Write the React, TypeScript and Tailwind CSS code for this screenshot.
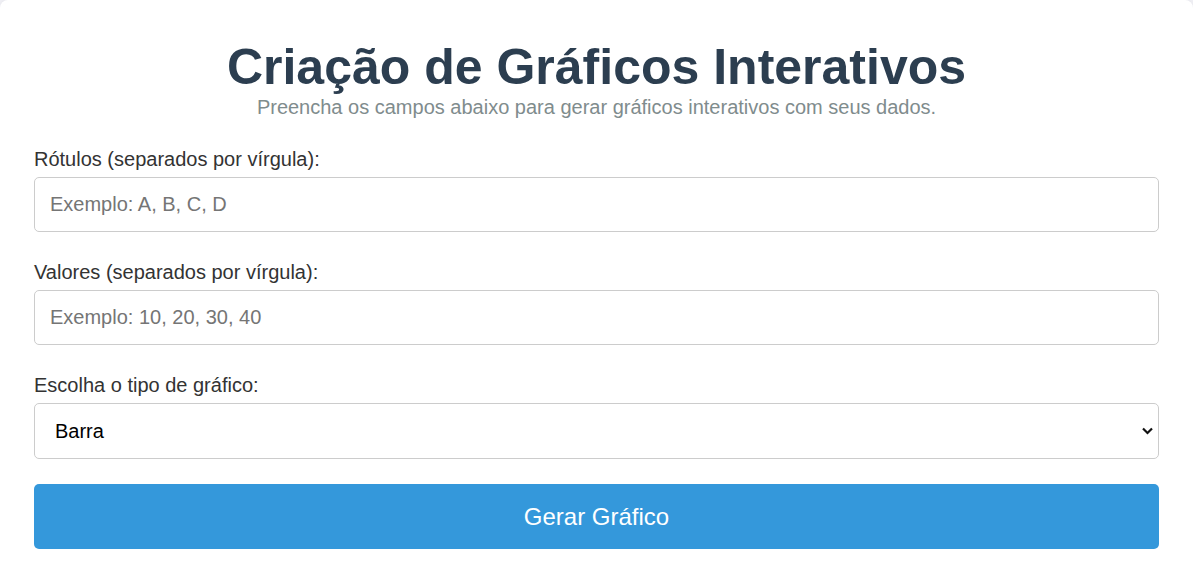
export default function App() {
  return (
    <div className="min-h-screen bg-[#f4f4f9] font-['Liberation_Sans',Arial,sans-serif] text-[#333]">
      <div className="rounded-lg bg-white px-[34px] pt-[38px] pb-[40px] shadow-[0_0_10px_rgba(0,0,0,0.1)]">
        <h1 className="text-center text-[50px] font-bold leading-[58px] text-[#2c3e50]">
          Criação de Gráficos Interativos
        </h1>
        <p className="text-center text-[20px] leading-[23px] text-[#7f8c8d]">
          Preencha os campos abaixo para gerar gráficos interativos com seus dados.
        </p>

        <form className="mt-[29px] flex flex-col">
          <label className="mb-[6px] block text-[20px] leading-[23px]">Rótulos (separados por vírgula):</label>
          <input
            type="text"
            placeholder="Exemplo: A, B, C, D"
            className="mb-[29px] h-[55px] w-full rounded-[5px] border border-[#ccc] px-[15px] text-[20px] placeholder:text-[#757575] focus:outline-none"
          />

          <label className="mb-[6px] block text-[20px] leading-[23px]">Valores (separados por vírgula):</label>
          <input
            type="text"
            placeholder="Exemplo: 10, 20, 30, 40"
            className="mb-[29px] h-[55px] w-full rounded-[5px] border border-[#ccc] px-[15px] text-[20px] placeholder:text-[#757575] focus:outline-none"
          />

          <label className="mb-[6px] block text-[20px] leading-[23px]">Escolha o tipo de gráfico:</label>
          <div className="relative mb-[25px]">
            <select className="h-[56px] w-full appearance-none rounded-[5px] border border-[#ccc] bg-white px-[20px] text-[20px] text-black focus:outline-none">
              <option>Barra</option>
              <option>Linha</option>
              <option>Pizza</option>
            </select>
            <svg
              className="pointer-events-none absolute right-[6px] top-1/2 h-[8px] w-[11px] -translate-y-1/2"
              viewBox="0 0 11 8"
              fill="none"
              stroke="#111"
              strokeWidth="2.2"
            >
              <path d="M1 1.5 L5.5 6 L10 1.5" />
            </svg>
          </div>

          <button
            type="button"
            className="h-[65px] w-full rounded-[5px] bg-[#3498db] text-[24px] text-white"
          >
            Gerar Gráfico
          </button>
        </form>
      </div>
    </div>
  );
}
